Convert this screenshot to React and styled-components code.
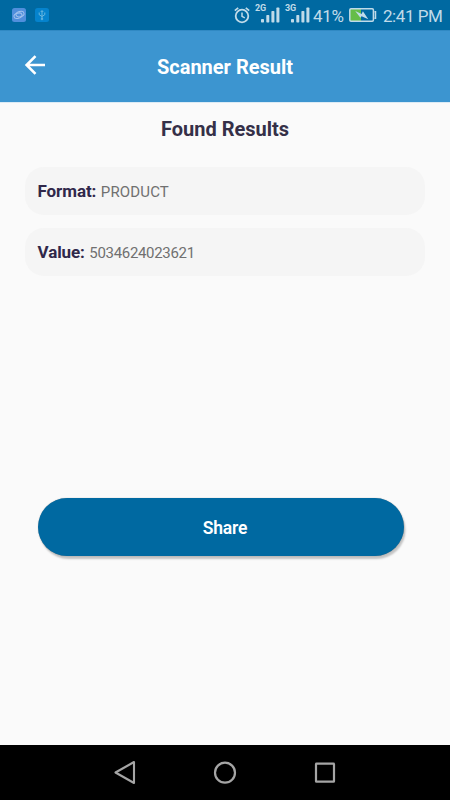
import React from "react";
import styled, { createGlobalStyle } from "styled-components";

const GlobalStyle = createGlobalStyle`
  * { box-sizing: border-box; }
  body { margin: 0; background: #fafafa; font-family: Roboto, "Noto Sans", sans-serif; }
`;

const Screen = styled.div`
  width: 450px;
  height: 800px;
  display: flex;
  flex-direction: column;
  overflow: hidden;
  background: #fafafa;
`;

const StatusBar = styled.div`
  height: 30px;
  flex: none;
  display: flex;
  align-items: center;
  justify-content: space-between;
  padding: 0 7px 0 11px;
  background: #0069a1;
  color: #c0dbe9;
`;

const Notifications = styled.div`
  display: flex;
  gap: 7px;
`;

const Indicators = styled.div`
  display: flex;
  align-items: center;
  height: 30px;
`;

const Icon = styled.svg`
  display: block;
  flex: none;
  margin-left: ${(p) => p.$gap || 0}px;
`;

const StatusText = styled.span`
  width: ${(p) => p.$width}px;
  margin-left: ${(p) => p.$gap}px;
  font-size: 17px;
  line-height: 30px;
  padding-top: 1px;
  letter-spacing: ${(p) => p.$spacing || 0}px;
  white-space: nowrap;
`;

const SignalBox = styled.div`
  display: flex;
  width: 25px;
  height: 30px;
  margin-left: 5px;
`;

const Network = styled.span`
  width: 5px;
  flex: none;
  padding-top: 3px;
  font-size: 9px;
  font-weight: 700;
  line-height: 10px;
  letter-spacing: -0.2px;
  white-space: nowrap;
`;

const Header = styled.header`
  height: 72px;
  flex: none;
  display: grid;
  grid-template-columns: 70px 1fr 70px;
  align-items: center;
  background: #3c95d0;
  border-top: 1px solid #3089c3;
`;

const BackButton = styled.button`
  width: 70px;
  height: 70px;
  padding: 0 0 3px;
  border: 0;
  background: none;
  display: flex;
  align-items: center;
  justify-content: center;
`;

const Title = styled.h1`
  margin: 0;
  text-align: center;
  color: #fff;
  font-size: 20px;
  line-height: 24px;
  font-weight: 700;
`;

const Content = styled.main`
  flex: 1;
  display: flex;
  flex-direction: column;
  border-top: 1px solid #dcebf5;
`;

const Heading = styled.h2`
  margin: 14px 0 26px;
  text-align: center;
  color: #353048;
  font-size: 20px;
  line-height: 24px;
  font-weight: 700;
`;

const Results = styled.div`
  display: flex;
  flex-direction: column;
  gap: 13px;
  padding: 0 25px;
`;

const ResultCard = styled.div`
  height: 48px;
  display: flex;
  align-items: baseline;
  gap: 4.5px;
  padding: 0 12.5px;
  line-height: 49px;
  border-radius: 19px;
  background: #f5f5f5;
`;

const Label = styled.span`
  color: #30284a;
  font-size: 17px;
  font-weight: 700;
  letter-spacing: -0.08px;
`;

const Value = styled.span`
  color: #707070;
  font-size: 15px;
  letter-spacing: ${(p) => p.$spacing || 0}px;
`;

const ShareButton = styled.button`
  width: 366px;
  height: 58px;
  margin: 222px 0 0 38px;
  padding: 2px 0 0 8px;
  border: 0;
  border-radius: 29px;
  background: #0069a1;
  box-shadow: 1.5px 3px 2px rgba(0, 0, 0, 0.22), 0 0 1px rgba(0, 0, 0, 0.4);
  color: #fff;
  font-family: inherit;
  font-size: 17.5px;
  font-weight: 600;
  letter-spacing: -0.2px;
`;

const NavBar = styled.nav`
  height: 55px;
  flex: none;
  display: flex;
  justify-content: center;
  align-items: center;
  gap: 76px;
  background: #000;
`;

function AppBadge({ usb }) {
  return (
    <Icon width="16" height="16" viewBox="0 0 16 16" fill="none" stroke={usb ? "#69b7e0" : "#a4c4ee"}>
      <rect x="1" y="1" width="14" height="14" rx="2.5" fill={usb ? "#0583cd" : "#508fdc"} stroke="none" />
      {usb ? (
        <>
          <path d="M8 4v8M5.2 5.5v2.2L8 9.5l2.8-1.8V5.5M6.8 5 8 3.5 9.2 5" />
          <circle cx="8" cy="12" r="0.8" />
        </>
      ) : (
        <>
          <ellipse cx="9" cy="7.1" rx="4.1" ry="2.6" transform="rotate(-15 9 7.1)" />
          <ellipse cx="7" cy="8.7" rx="4.1" ry="2.6" transform="rotate(-15 7 8.7)" />
        </>
      )}
    </Icon>
  );
}

function Alarm() {
  return (
    <Icon width="16" height="18" viewBox="0 0 16 18" fill="none" stroke="currentColor">
      <circle cx="8" cy="10" r="6.3" strokeWidth="1.8" />
      <path d="M8 6.5v3.8l2.8 1.5" strokeWidth="1.5" />
      <path d="M.8 4.6 4.2 1.8M15.2 4.6l-3.4-2.8" strokeWidth="1.7" />
    </Icon>
  );
}

function Signal({ network }) {
  return (
    <SignalBox>
      <Network>{network}</Network>
      <Icon width="20" height="30" viewBox="0 0 20 30" fill="currentColor">
        <rect x="1" y="19" width="3" height="3.5" rx=".7" />
        <rect x="6.3" y="15" width="3" height="7.5" rx=".7" />
        <rect x="11.4" y="11" width="3" height="11.5" rx=".7" />
        <rect x="16.4" y="7.5" width="3" height="15" rx=".7" />
      </Icon>
    </SignalBox>
  );
}

function Battery() {
  return (
    <Icon $gap={4} width="29" height="16" viewBox="0 0 29 16">
      <rect x="2" y="2" width="11" height="12" fill="#65bd49" />
      <path d="M3 1.8h21.2q1.2 0 1.2 1.2v10q0 1.2-1.2 1.2H3q-1.2 0-1.2-1.2V3Q1.8 1.8 3 1.8M26.5 4.8h1v6.4h-1" fill="none" stroke="#c0dbe9" strokeWidth="1.5" />
      <path d="m7.2 4 6.4 3 1.3-2.8 5.4 8-6.7-3-1.2 1.6Z" fill="#c0dbe9" />
    </Icon>
  );
}

export default function App() {
  return (
    <>
      <GlobalStyle />
      <Screen>
        <StatusBar>
          <Notifications>
            <AppBadge />
            <AppBadge usb />
          </Notifications>
          <Indicators>
            <Alarm />
            <Signal network="2G" />
            <Signal network="3G" />
            <StatusText $width={31} $gap={3} $spacing={-0.3}>41%</StatusText>
            <Battery />
            <StatusText $width={60} $gap={6} $spacing={-0.45}>2:41 PM</StatusText>
          </Indicators>
        </StatusBar>
        <Header>
          <BackButton aria-label="Back">
            <Icon width="22" height="22" viewBox="0 0 22 22" fill="none" stroke="#fff" strokeWidth="2.6">
              <path d="M21 11H3M11.5 2.1 2.6 11l8.9 8.9" />
            </Icon>
          </BackButton>
          <Title>Scanner Result</Title>
        </Header>
        <Content>
          <Heading>Found Results</Heading>
          <Results>
            <ResultCard>
              <Label>Format:</Label>
              <Value $spacing={0.15}>PRODUCT</Value>
            </ResultCard>
            <ResultCard>
              <Label>Value:</Label>
              <Value $spacing={-0.32}>5034624023621</Value>
            </ResultCard>
          </Results>
          <ShareButton>Share</ShareButton>
        </Content>
        <NavBar>
          <Icon width="24" height="26" viewBox="0 0 24 26" fill="none" stroke="#a5a5a5" strokeWidth="2.1" strokeLinejoin="round">
            <path d="M21 2v21L2.5 12.5Z" />
          </Icon>
          <Icon width="24" height="24" viewBox="0 0 24 24" fill="none" stroke="#a5a5a5" strokeWidth="2.2">
            <circle cx="12" cy="11.7" r="10" />
          </Icon>
          <Icon width="24" height="24" viewBox="0 0 24 24" fill="none" stroke="#a5a5a5" strokeWidth="2.2">
            <rect x="3" y="2.7" width="18" height="18" rx=".5" />
          </Icon>
        </NavBar>
      </Screen>
    </>
  );
}
